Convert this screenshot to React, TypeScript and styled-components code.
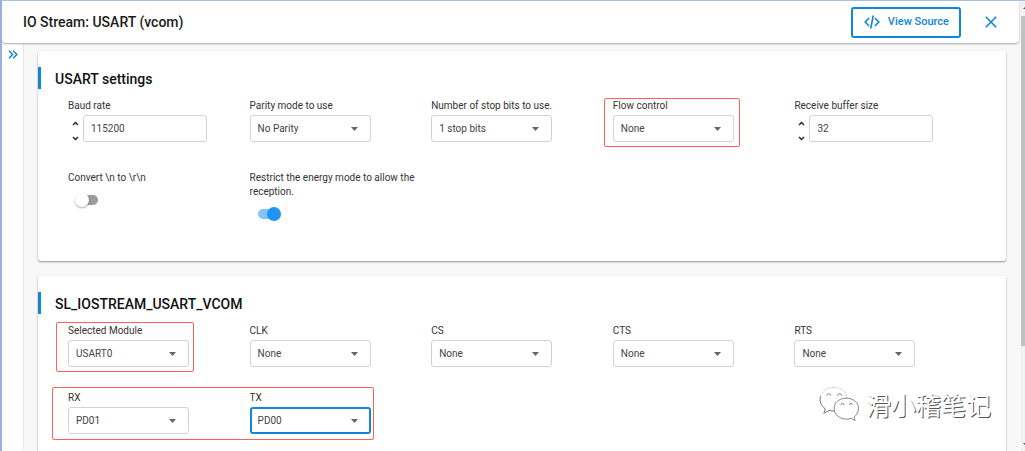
import React, { useId } from "react";
import styled, { createGlobalStyle, css } from "styled-components";

const blue = "#0f86d6";

const GlobalStyle = createGlobalStyle`
  *, *::before, *::after { box-sizing: border-box; }
  body {
    margin: 0;
    background: #f8f8f8;
    color: #333;
    font-family: Roboto, "Liberation Sans", sans-serif;
    font-size: 10px;
    line-height: 14px;
  }
  button, input, select { font: inherit; color: inherit; }
`;

const Window = styled.div`
  position: relative;
  display: flex;
  height: 100vh;
  overflow: hidden;
  border-top: 1px solid #a9c0df;
  border-left: 2px solid #96b1da;
`;

const Page = styled.div`
  flex: 1;
  min-width: 0;
  display: flex;
  flex-direction: column;
`;

const Header = styled.header`
  display: flex;
  align-items: center;
  height: 42px;
  flex-shrink: 0;
  padding: 0 18px 0 21px;
  background: #fff;
  border-radius: 0 0 4px 4px;
  box-shadow: 0 1px 2px rgba(0, 0, 0, 0.35);
  z-index: 1;
`;

const PageTitle = styled.h1`
  flex: 1;
  margin: 0;
  font-size: 14px;
  font-weight: 500;
  line-height: 20px;
  color: #1c1c1c;
`;

const SourceButton = styled.button`
  display: flex;
  align-items: center;
  justify-content: space-between;
  width: 110px;
  height: 31px;
  padding: 0 10px 0 11px;
  border: 2px solid ${blue};
  border-radius: 3px;
  background: #fff;
  color: ${blue};
  font-size: 11px;
  font-weight: 500;
`;

const IconButton = styled.button`
  display: flex;
  justify-content: center;
  align-items: center;
  padding: 4px;
  border: 0;
  background: none;
  color: ${blue};
`;

const CloseButton = styled(IconButton)`
  margin-left: 20px;
`;

const Body = styled.div`
  flex: 1;
  min-height: 0;
  display: flex;
`;

const Rail = styled.aside`
  display: flex;
  align-items: flex-start;
  justify-content: center;
  width: 22px;
  padding-top: 3px;
  background: #fff;
  border-right: 1px solid #e8e8e8;
  border-radius: 0 0 4px 0;
`;

const Content = styled.main`
  flex: 1;
  min-width: 0;
  display: flex;
  flex-direction: column;
  gap: 15px;
  padding: 8px 13px 0 14px;
`;

const Card = styled.section`
  flex-shrink: 0;
  padding: 16px 0 40px;
  background: #fff;
  border-radius: 3px;
  box-shadow: 0 1px 2px rgba(0, 0, 0, 0.42);
`;

const CardTitle = styled.h2`
  margin: 0 0 10px;
  padding: 2px 0 0 14px;
  border-left: 3px solid ${blue};
  font-size: 14px;
  font-weight: 500;
  line-height: 20px;
  color: #111;
`;

const Fields = styled.div`
  display: grid;
  grid-template-columns: repeat(5, 1fr);
  row-gap: 24px;
  padding: 0 30px;
`;

const Field = styled.div<{ $tall?: boolean }>`
  position: relative;
  padding-bottom: ${(p) => (p.$tall ? 5 : 0)}px;
`;

const Label = styled.label`
  display: block;
  width: 165px;
  margin-bottom: 2px;
`;

const SelectWrap = styled.div`
  display: grid;
  align-items: center;
  width: 121px;
  & > * { grid-area: 1 / 1; }
  & > svg { justify-self: end; margin-right: 13px; pointer-events: none; }
`;

const boxStyle = css`
  height: 27px;
  padding: 0 7px;
  border: 1px solid #d2d2d2;
  border-radius: 3px;
  background: #fff;
  outline: 0;
  color: #444;
`;

const Select = styled.select<{ $active?: boolean }>`
  ${boxStyle}
  width: 100%;
  appearance: none;
  ${(p) => p.$active && css`
    padding: 0 6px;
    border: 2px solid ${blue};
  `}
`;

const Stepper = styled.div`
  display: flex;
  align-items: center;
`;

const Steps = styled.div`
  display: flex;
  flex-direction: column;
  justify-content: space-between;
  width: 15px;
  height: 27px;
  padding-top: 4px;
`;

const StepButton = styled.button`
  display: flex;
  justify-content: center;
  padding: 2px 0 1px;
  border: 0;
  background: none;
`;

const NumberInput = styled.input`
  ${boxStyle}
  width: 124px;
  appearance: textfield;
  &::-webkit-inner-spin-button { display: none; }
`;

const Switch = styled.input`
  appearance: none;
  display: block;
  position: relative;
  width: 24px;
  height: 14px;
  margin: 8px 0 0 7px;
  &::before {
    content: "";
    position: absolute;
    inset: 2px 1px;
    border-radius: 5px;
    background: #9b9b9b;
  }
  &::after {
    content: "";
    position: absolute;
    left: 0;
    width: 14px;
    height: 14px;
    border-radius: 50%;
    background: #fff;
    box-shadow: 0 1px 2px rgba(0, 0, 0, 0.35);
  }
  &:checked::before { background: #85c3f8; }
  &:checked::after { left: 10px; background: #2093f3; box-shadow: none; }
`;

const marks = {
  flow: css`inset: -1px auto 0 -9px; width: 136px;`,
  module: css`inset: -2px auto -5px -12px; width: 138px;`,
  pins: css`inset: -4px auto -6px -16px; width: calc(100% + 140px);`,
};

const Mark = styled.div<{ $kind: keyof typeof marks }>`
  position: absolute;
  z-index: 1;
  border: 1px solid #f8625a;
  border-radius: 2px;
  pointer-events: none;
  ${(p) => marks[p.$kind]}
`;

const Scrollbar = styled.div`
  display: flex;
  flex-direction: column;
  justify-content: space-between;
  width: 4px;
  margin-left: 2px;
  background: #f1f1f1;
`;

const ScrollThumb = styled.div`
  flex: 0 0 330px;
  margin-bottom: auto;
  background: #c1c1c1;
`;

const Arrow = styled.svg`
  flex-shrink: 0;
  width: 4px;
  height: 15px;
`;

const Watermark = styled.div`
  position: absolute;
  right: 34px;
  bottom: 29px;
  display: flex;
  align-items: center;
  gap: 7px;
  color: #fff;
  font-family: "Noto Sans CJK SC", sans-serif;
  font-size: 25px;
  line-height: 36px;
  text-shadow: 1px 1px 0 #555;
`;

type FieldProps = { label: string; value: string; active?: boolean; mark?: keyof typeof marks };

function SelectField({ label, value, active, mark }: FieldProps) {
  const id = useId();
  return (
    <Field>
      <Label htmlFor={id}>{label}</Label>
      <SelectWrap>
        <Select id={id} $active={active} defaultValue={value}>
          <option>{value}</option>
        </Select>
        <svg width="7" height="4" viewBox="0 0 7 4" aria-hidden="true">
          <path d="M0 0h7L3.500 4z" fill="#666" />
        </svg>
      </SelectWrap>
      {mark && <Mark $kind={mark} />}
    </Field>
  );
}

function NumberField({ label, value }: FieldProps) {
  const id = useId();
  return (
    <Field $tall>
      <Label htmlFor={id}>{label}</Label>
      <Stepper>
        <Steps>
          <StepButton type="button" aria-label="Increase">
            <svg width="7" height="5" viewBox="0 0 7 5" fill="none" stroke="#222" strokeWidth="1.4">
              <path d="M1 4l2.500-2.500L6 4" />
            </svg>
          </StepButton>
          <StepButton type="button" aria-label="Decrease">
            <svg width="7" height="5" viewBox="0 0 7 5" fill="none" stroke="#222" strokeWidth="1.4">
              <path d="M1 1l2.500 2.500L6 1" />
            </svg>
          </StepButton>
        </Steps>
        <NumberInput id={id} type="number" defaultValue={value} />
      </Stepper>
    </Field>
  );
}

function SwitchField({ label, on }: { label: string; on?: boolean }) {
  const id = useId();
  return (
    <Field>
      <Label htmlFor={id}>{label}</Label>
      <Switch id={id} type="checkbox" defaultChecked={on} />
    </Field>
  );
}

function ChatLogo() {
  return (
    <svg width="40" height="36" viewBox="0 0 41 36" fill="#fff" stroke="#666" strokeWidth="0.8" aria-hidden="true">
      <path d="M15 1C7 1 1 6 1 13.500c0 4 2 7 5.500 9.500L5 27.500l5.500-3c2 .6 4 .8 6.500.6 9-.4 12-6 12-12C29 6 23 1 15 1z" stroke="#bbb" strokeDasharray="2 1" />
      <path d="M1.500 10C.5 16 2 20 6.500 23L5 27.500l5.500-3c2 .6 3.500.8 5.500.6" fill="none" />
      <path d="M28 12c-7 0-12.500 4.500-12.500 10.500S21 33.500 28 33.500c2 0 3.500-.3 5-.8l4 2.300-1-3.700c2.700-2 4.500-5 4.500-8.800C40.500 16.500 35 12 28 12z" />
      <g fill="none">
        <path d="M8 9.500a2 2 0 0 1 4 0M19 9.500a2 2 0 0 1 4 0M22.500 19a1.600 1.600 0 0 1 3.200 0M31 19a1.600 1.600 0 0 1 3.200 0" />
      </g>
    </svg>
  );
}

export default function App() {
  return (
    <>
      <GlobalStyle />
      <Window>
        <Page>
          <Header>
            <PageTitle>IO Stream: USART (vcom)</PageTitle>
            <SourceButton type="button">
              <svg width="16" height="14" viewBox="0 0 16 14" fill="none" stroke="currentColor" strokeWidth="1.6" aria-hidden="true">
                <path d="M5 3L1.200 7 5 11M11 3l3.800 4L11 11M9.300.5L6.700 13.500" />
              </svg>
              View Source
            </SourceButton>
            <CloseButton type="button" aria-label="Close">
              <svg width="12" height="12" viewBox="0 0 12 12" fill="none" stroke="currentColor" strokeWidth="1.6">
                <path d="M.8.8l10.400 10.400M11.200.8L.8 11.200" />
              </svg>
            </CloseButton>
          </Header>
          <Body>
            <Rail>
              <IconButton type="button" aria-label="Expand panel">
                <svg width="10" height="9" viewBox="0 0 10 9" fill="none" stroke="currentColor" strokeWidth="1.5">
                  <path d="M1 .8l3.600 3.700L1 8.200M5.200.8l3.600 3.700-3.600 3.700" />
                </svg>
              </IconButton>
            </Rail>
            <Content>
              <Card>
                <CardTitle>USART settings</CardTitle>
                <Fields>
                  <NumberField label="Baud rate" value="115200" />
                  <SelectField label="Parity mode to use" value="No Parity" />
                  <SelectField label="Number of stop bits to use." value="1 stop bits" />
                  <SelectField label="Flow control" value="None" mark="flow" />
                  <NumberField label="Receive buffer size" value="32" />
                  <SwitchField label="Convert \n to \r\n" />
                  <SwitchField label="Restrict the energy mode to allow the reception." on />
                </Fields>
              </Card>
              <Card>
                <CardTitle>SL_IOSTREAM_USART_VCOM</CardTitle>
                <Fields>
                  <SelectField label="Selected Module" value="USART0" mark="module" />
                  <SelectField label="CLK" value="None" />
                  <SelectField label="CS" value="None" />
                  <SelectField label="CTS" value="None" />
                  <SelectField label="RTS" value="None" />
                  <SelectField label="RX" value="PD01" mark="pins" />
                  <SelectField label="TX" value="PD00" active />
                </Fields>
              </Card>
            </Content>
          </Body>
        </Page>
        <Scrollbar aria-hidden="true">
          <Arrow viewBox="0 0 4 15"><path d="M2 8l3-3v3z" fill="#555" /></Arrow>
          <ScrollThumb />
          <Arrow viewBox="0 0 4 15"><path d="M2 7h3v3z" fill="#555" /></Arrow>
        </Scrollbar>
        <Watermark>
          <ChatLogo />
          滑小稽笔记
        </Watermark>
      </Window>
    </>
  );
}
